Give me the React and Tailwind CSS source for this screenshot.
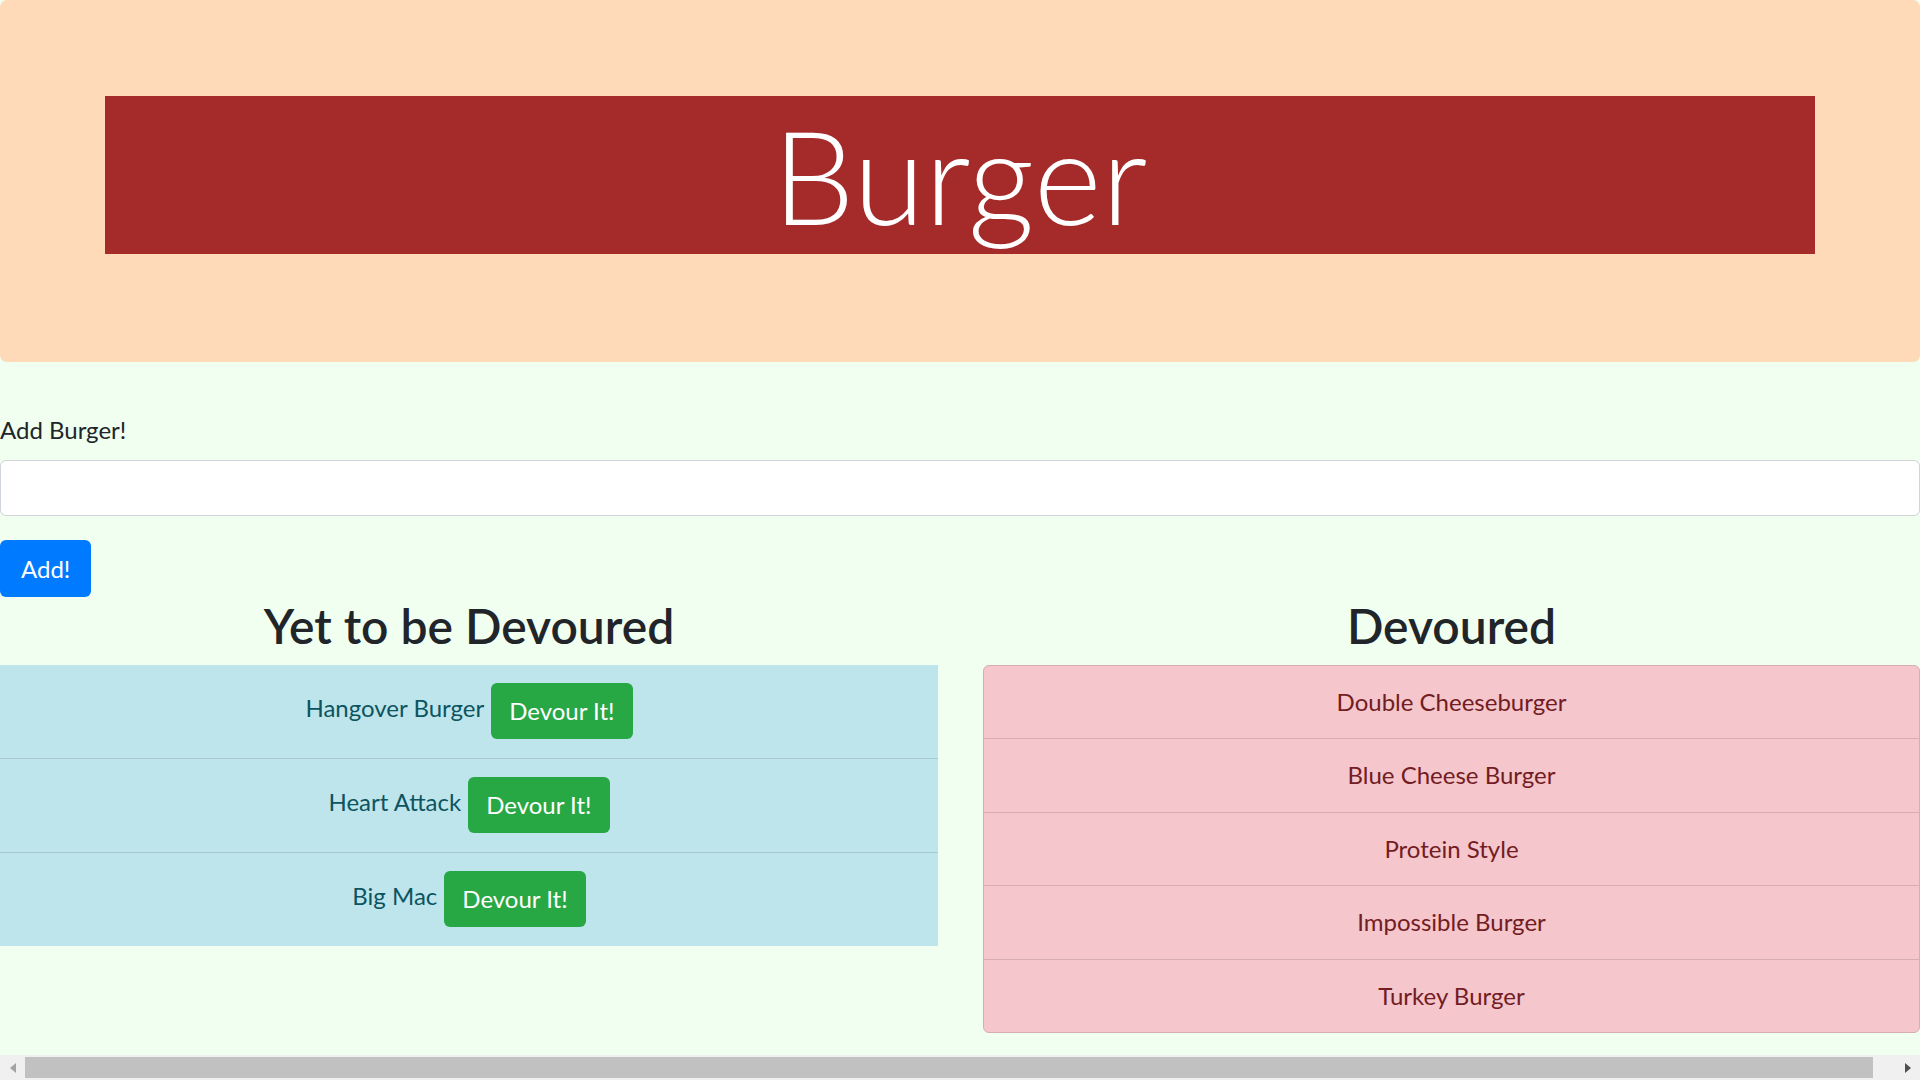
import React from "react";

const todo = ["Hangover Burger", "Heart Attack", "Big Mac"];
const done = ["Double Cheeseburger", "Blue Cheese Burger", "Protein Style", "Impossible Burger", "Turkey Burger"];

export default function App() {
  return (
    <div className="min-h-screen flex flex-col bg-[#f0fff0] font-['Lato',sans-serif] text-[24px] leading-[36px] text-[#212529] overflow-hidden">
      <div className="bg-[#ffdab9] rounded-[7px] pt-[96px] pb-[96px] px-[105px] mb-[50px]">
        <h1 className="bg-[#a52a2a] text-white text-center font-light text-[130px] leading-[158px] mb-[12px]">Burger</h1>
      </div>

      <form onSubmit={(e) => e.preventDefault()}>
        <label className="block mb-[12px]">Add Burger!</label>
        <input type="text" className="block w-full h-[56px] bg-white border border-[#ced4da] rounded-[6px] px-[18px] mb-[24px] outline-none" />
        <button type="submit" className="h-[57px] px-[21px] bg-[#007bff] text-white rounded-[6px] leading-[36px]">Add!</button>
      </form>

      <div className="flex">
        <div className="w-[938px]">
          <h2 className="text-center text-[48px] leading-[57.6px] font-semibold mb-[10px]">Yet to be Devoured</h2>
          <ul className="bg-[#bee5eb] text-[#0c5460]">
            {todo.map((b, i) => (
              <li key={b} className={`flex justify-center items-center py-[18.5px] ${i > 0 ? "border-t border-[#a6c8ce]" : ""}`}>
                <span className="mb-[7px] mr-[7px]">{b}</span>
                <button className="h-[56px] px-[18px] bg-[#28a745] text-white rounded-[6px] leading-[36px]">Devour It!</button>
              </li>
            ))}
          </ul>
        </div>
        <div className="flex-1 ml-[45px]">
          <h2 className="text-center text-[48px] leading-[57.6px] font-semibold mb-[10px]">Devoured</h2>
          <ul className="bg-[#f5c6cb] text-[#721c24] border border-[#d6adb2] rounded-[6px]">
            {done.map((b, i) => (
              <li key={b} className={`text-center py-[18.25px] ${i > 0 ? "border-t border-[#d6adb2]" : ""}`}>{b}</li>
            ))}
          </ul>
        </div>
      </div>

      <div className="flex-1" />

      <div className="h-[25px] bg-[#f0f0f0] flex items-center">
        <div className="w-[25px] h-full flex items-center justify-center">
          <svg width="6" height="10" viewBox="0 0 6 10"><path d="M6 0 L0 5 L6 10 Z" fill="#a3a3a3" /></svg>
        </div>
        <div className="w-[1848px] h-[21px] bg-[#c1c1c1]" />
        <div className="flex-1" />
        <div className="w-[25px] h-full flex items-center justify-center">
          <svg width="6" height="10" viewBox="0 0 6 10"><path d="M0 0 L6 5 L0 10 Z" fill="#505050" /></svg>
        </div>
      </div>
    </div>
  );
}
